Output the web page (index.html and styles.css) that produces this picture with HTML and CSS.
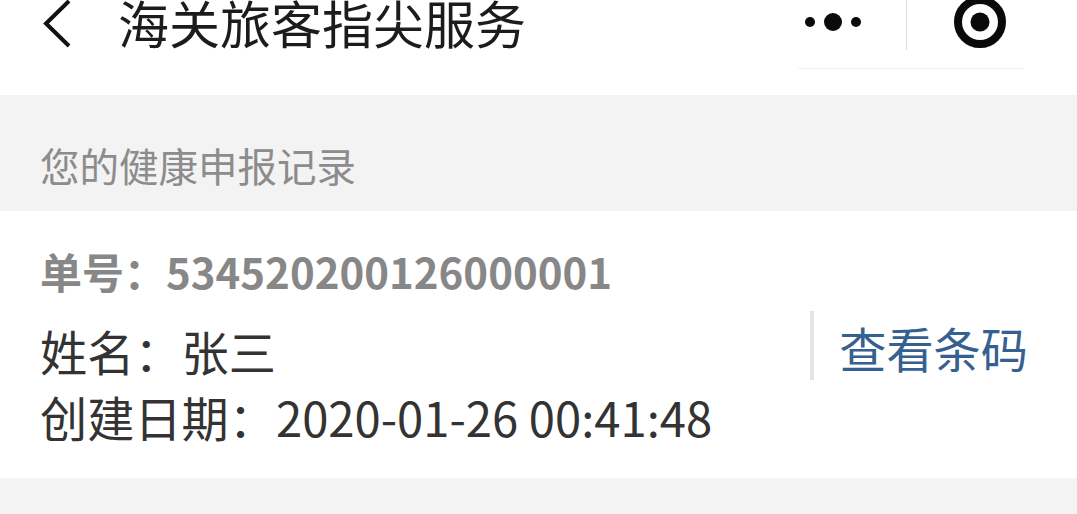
FILE: index.html
```html
<!DOCTYPE html>
<html lang="zh">
<head>
<meta charset="utf-8">
<title>海关旅客指尖服务</title>
<link rel="stylesheet" href="styles.css">
</head>
<body>
<header class="nav">
  <svg class="back" viewBox="0 0 30 50" width="30" height="50"><path d="M27 1 L4 23.500 L27 46" fill="none" stroke="#111" stroke-width="4"/></svg>
  <h1 class="title">海关旅客指尖服务</h1>
  <div class="capsule">
    <svg class="more" viewBox="0 0 64 20" width="64" height="20"><circle cx="9" cy="10" r="5" fill="#0a0a0a"/><circle cx="32" cy="10" r="9" fill="#0a0a0a"/><circle cx="55" cy="10" r="5" fill="#0a0a0a"/></svg>
    <span class="capsule-divider"></span>
    <svg class="target" viewBox="0 0 54 54" width="54" height="54"><circle cx="27" cy="27" r="22" fill="none" stroke="#0a0a0a" stroke-width="8"/><circle cx="27" cy="27" r="9.500" fill="#0a0a0a"/></svg>
  </div>
</header>
<main>
  <h2 class="section-title">您的健康申报记录</h2>
  <section class="card">
    <div class="info">
      <p class="order">单号：534520200126000001</p>
      <p class="line name">姓名：张三</p>
      <p class="line date">创建日期：2020-01-26 00:41:48</p>
    </div>
    <a class="barcode">查看条码</a>
  </section>
</main>
</body>
</html>
```

FILE: styles.css
```css
* { box-sizing: border-box; }
html, body { margin: 0; height: 100%; overflow: hidden; }
body {
  background: #f3f3f3;
  font-family: "Noto Sans CJK SC", "Noto Sans", sans-serif;
}
.nav {
  height: 95px;
  background: #fff;
  display: flex;
  align-items: flex-start;
  padding-left: 42px;
}
.back { flex: none; }
.title {
  margin: 0 0 0 46px;
  font-size: 51px;
  line-height: 44px;
  font-weight: 400;
  color: #1c1c1c;
}
.capsule {
  margin-left: auto;
  width: 226px;
  height: 69px;
  padding-left: 3px;
  margin-right: 53px;
  display: flex;
  align-items: flex-start;
  border-bottom: 1px solid #f1f1f1;
}
.more { margin-top: 12px; flex: none; }
.capsule-divider {
  width: 1px;
  height: 50px;
  background: #dedede;
  margin-left: 41px;
}
.target { margin-left: 46px; margin-top: -5px; flex: none; }
.section-title {
  margin: 0;
  height: 116px;
  padding: 42px 0 0 40px;
  font-size: 39.500px;
  line-height: 56px;
  font-weight: 400;
  color: #8c8c8c;
}
.card {
  height: 267px;
  background: #fff;
  padding: 0 49px 0 40px;
  display: flex;
  align-items: flex-start;
  justify-content: space-between;
}
.info { padding-top: 31px; }
.order, .line { margin: 0; white-space: nowrap; }
.order {
  font-size: 42px;
  line-height: 58px;
  font-weight: 700;
  color: #878787;
}
.line {
  font-size: 47.200px;
  line-height: 66px;
  color: #333;
}
.name { margin-top: 18px; }
.barcode {
  margin-top: 100px;
  height: 69px;
  padding-left: 25px;
  border-left: 4px solid #e4e4e4;
  font-size: 47.200px;
  line-height: 74px;
  color: #35608f;
  white-space: nowrap;
}
```
